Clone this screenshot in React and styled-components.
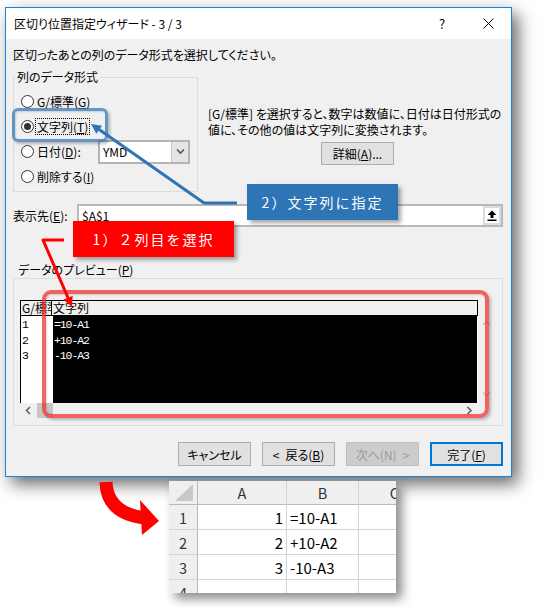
import React from "react";
import styled, { createGlobalStyle, css } from "styled-components";

const UI_FONT = `"Noto Sans CJK JP", "Noto Sans", sans-serif`;
const MONO_FONT = `"Liberation Mono", "Noto Sans CJK JP", monospace`;

const GlobalStyle = createGlobalStyle`
  html, body { margin: 0; padding: 0; background: #ffffff; }
  body { font-family: ${UI_FONT}; }
`;

const Page = styled.div`
  position: relative;
  width: 541px;
  height: 607px;
  overflow: hidden;
  padding-top: 7px;
  box-sizing: border-box;
  font-family: ${UI_FONT};
  font-feature-settings: "palt";
`;

/* ---------- dialog window ---------- */

const Dialog = styled.div`
  margin-left: 5px;
  width: 507px;
  height: 470px;
  box-sizing: border-box;
  border: 1px solid #1883d7;
  background: #f0f0f0;
  box-shadow: 6px 7px 16px rgba(0, 0, 0, 0.6);
  display: flex;
  flex-direction: column;
  font-size: 12px;
  color: #000;
`;

const TitleBar = styled.div`
  height: 31px;
  background: #ffffff;
  display: flex;
  align-items: center;
`;

const Title = styled.div`
  flex: 1;
  padding-left: 8px;
  line-height: 16px;
`;

const TitleButton = styled.div`
  width: 46px;
  height: 31px;
  display: flex;
  align-items: center;
  justify-content: center;
  font-size: 13px;
`;

const Body = styled.div`
  flex: 1;
  display: flex;
  flex-direction: column;
  padding: 8px 8px 0 7px;
`;

const Instruction = styled.div`
  line-height: 16px;
  white-space: nowrap;
`;

const Key = styled.span`
  text-decoration: underline;
  text-underline-offset: 1px;
`;

/* ---------- column data format group ---------- */

const FormatRow = styled.div`
  display: flex;
  margin-top: 14px;
`;

const Group = styled.div`
  width: 185px;
  box-sizing: border-box;
  border: 1px solid #dcdcdc;
  padding-bottom: 2px;
`;

const Legend = styled.div`
  width: fit-content;
  margin: -10px 0 3px 1px;
  padding: 0 2px;
  background: #f0f0f0;
  line-height: 18px;
`;

const RadioRow = styled.div`
  height: 25px;
  display: flex;
  align-items: center;
  padding-left: 7px;
`;

const RadioDot = styled.span`
  width: 13px;
  height: 13px;
  box-sizing: border-box;
  border-radius: 50%;
  border: 1px solid #333;
  background: #fff;
  display: flex;
  align-items: center;
  justify-content: center;
  flex: none;
  &::after {
    content: "";
    width: 7px;
    height: 7px;
    border-radius: 50%;
    background: ${(p) => (p.$checked ? "#333" : "transparent")};
  }
`;

const RadioLabel = styled.span`
  margin-left: 3px;
  line-height: 15px;
  white-space: nowrap;
  width: ${(p) => (p.$width ? `${p.$width}px` : "auto")};
  ${(p) =>
    p.$focused &&
    css`
      outline: 1px dotted #000;
      outline-offset: 0;
      padding: 0 1px;
      margin-left: 2px;
    `}
`;

const Select = styled.div`
  width: 92px;
  height: 24px;
  box-sizing: border-box;
  border: 2px solid #b4b4b4;
  background: #fff;
  display: flex;
`;

const SelectValue = styled.div`
  flex: 1;
  padding-left: 3px;
  line-height: 20px;
  font-size: 12px;
`;

const SelectButton = styled.div`
  width: 16px;
  background: #e5e5e5;
  border-left: 1px solid #c8c8c8;
  display: flex;
  align-items: center;
  justify-content: center;
`;

const Description = styled.div`
  margin-left: 10px;
  width: 295px;
  padding-top: 29px;
  display: flex;
  flex-direction: column;
`;

const DescText = styled.div`
  line-height: 16px;
  white-space: nowrap;
`;

const Button = styled.div`
  width: 73px;
  height: ${(p) => p.$h || 24}px;
  box-sizing: border-box;
  border: 1px solid #adadad;
  background: #e1e1e1;
  display: flex;
  align-items: center;
  justify-content: center;
  font-size: 12px;
  white-space: pre;
  ${(p) =>
    p.$primary &&
    css`
      border: 2px solid #0078d7;
    `}
  ${(p) =>
    p.$disabled &&
    css`
      border-color: #bfbfbf;
      background: #cccccc;
      color: #9a9a9a;
    `}
`;

const DetailButton = styled(Button)`
  margin: 4px auto 0;
  position: relative;
  left: 2px;
`;

/* ---------- destination row ---------- */

const DestRow = styled.div`
  display: flex;
  align-items: center;
  margin-top: 12px;
  height: 23px;
`;

const DestLabel = styled.div`
  width: 64px;
  white-space: nowrap;
`;

const DestInput = styled.div`
  flex: 1;
  height: 23px;
  box-sizing: border-box;
  border: 2px solid #b9b9b9;
  background: #fff;
  display: flex;
`;

const DestValue = styled.div`
  flex: 1;
  padding-left: 3px;
  line-height: 19px;
`;

const PickerButton = styled.div`
  width: 18px;
  background: #dcdcdc;
  display: flex;
  align-items: center;
  justify-content: center;
`;

const PickerFace = styled.div`
  width: 14px;
  height: 15px;
  background: #fff;
  display: flex;
  align-items: center;
  justify-content: center;
`;

/* ---------- data preview ---------- */

const PreviewCaption = styled.div`
  margin-top: 35px;
  padding-left: 5px;
  line-height: 16px;
`;

const PreviewGroup = styled.div`
  height: 148px;
  box-sizing: border-box;
  border: 1px solid #dcdcdc;
  padding: 21px 0 0 6px;
`;

const PreviewFrame = styled.div`
  width: 475px;
  display: flex;
  flex-direction: column;
`;

const TableRow = styled.div`
  display: flex;
`;

const Table = styled.div`
  width: 458px;
  display: flex;
  flex-direction: column;
`;

const TableHead = styled.div`
  height: 16px;
  box-sizing: border-box;
  border: 1px solid #000;
  display: flex;
  background: #f0f0f0;
  font-size: 12px;
  line-height: 14px;
  font-feature-settings: normal;
`;

const HeadCell = styled.div`
  width: ${(p) => (p.$w ? `${p.$w}px` : "auto")};
  flex: ${(p) => (p.$w ? "none" : 1)};
  box-sizing: border-box;
  border-right: ${(p) => (p.$w ? "1px solid #000" : "none")};
  padding-left: 1px;
  overflow: hidden;
  white-space: nowrap;
`;

const TableBody = styled.div`
  height: 87px;
  box-sizing: border-box;
  border-left: 1px solid #000;
  border-right: 1px solid #fff;
  display: flex;
`;

const BodyColumn = styled.div`
  width: ${(p) => (p.$w ? `${p.$w}px` : "auto")};
  flex: ${(p) => (p.$w ? "none" : 1)};
  background: ${(p) => (p.$dark ? "#000" : "#fff")};
  color: ${(p) => (p.$dark ? "#fff" : "#000")};
  padding: 1px 0 0 1px;
  font-family: ${MONO_FONT};
  font-size: 11.5px;
  letter-spacing: -1.1px;
  line-height: 15.5px;
`;

const VScroll = styled.div`
  width: 17px;
  display: flex;
  flex-direction: column;
  justify-content: space-between;
  align-items: center;
  padding: 20px 0 5px;
`;

const HScroll = styled.div`
  width: 458px;
  height: 15px;
  display: flex;
  align-items: stretch;
`;

const ScrollArrow = styled.div`
  width: 17px;
  display: flex;
  align-items: center;
  justify-content: center;
`;

const ScrollThumb = styled.div`
  width: 16px;
  background: #c6c6c6;
`;

const ScrollTrack = styled.div`
  flex: 1;
`;

const ButtonRow = styled.div`
  margin-top: 16px;
  display: flex;
  justify-content: flex-end;
  gap: 11px;
`;

/* ---------- worksheet below the dialog ---------- */

const Sheet = styled.div`
  margin: 4px 0 0 169px;
  width: 227px;
  height: 112px;
  overflow: hidden;
  background: #fff;
  box-shadow: 6px 6px 10px rgba(0, 0, 0, 0.45);
  display: grid;
  grid-template-columns: 29px 89px 72px 72px;
  grid-template-rows: 24px repeat(4, 25px);
  font-family: ${UI_FONT};
  font-feature-settings: normal;
`;

const Cell = styled.div`
  box-sizing: border-box;
  border-right: 1px solid #d4d4d4;
  border-bottom: 1px solid #d4d4d4;
  display: flex;
  align-items: center;
  justify-content: ${(p) =>
    p.$align === "right" ? "flex-end" : p.$align === "left" ? "flex-start" : "center"};
  padding: 0 3px;
  font-size: 15px;
  color: #000;
  white-space: nowrap;
  position: relative;
  ${(p) =>
    p.$head &&
    css`
      background: #efefef;
      color: #333;
      font-size: 14.5px;
    `}
  ${(p) =>
    p.$colHead &&
    css`
      border-bottom-color: #b9b9b9;
    `}
  ${(p) =>
    p.$rowHead &&
    css`
      border-right-color: #b9b9b9;
    `}
`;

/* ---------- annotations drawn over the page ---------- */

const Overlay = styled.svg`
  position: absolute;
  left: 0;
  top: 0;
  width: 541px;
  height: 607px;
  pointer-events: none;
`;

const Frame = styled.div`
  position: absolute;
  left: ${(p) => p.$x}px;
  top: ${(p) => p.$y}px;
  width: ${(p) => p.$w}px;
  height: ${(p) => p.$h}px;
  box-sizing: border-box;
  border: ${(p) => p.$line}px solid ${(p) => p.$color};
  border-radius: ${(p) => p.$r}px;
  box-shadow: 2px 2px 3px rgba(0, 0, 0, 0.25), inset 1px 1px 2px rgba(0, 0, 0, 0.15);
  pointer-events: none;
`;

const Callout = styled.div`
  position: absolute;
  left: ${(p) => p.$x}px;
  top: ${(p) => p.$y}px;
  width: ${(p) => p.$w}px;
  height: ${(p) => p.$h}px;
  background: ${(p) => p.$bg};
  color: #fff;
  display: flex;
  align-items: center;
  justify-content: center;
  font-size: 14px;
  letter-spacing: 2px;
  font-feature-settings: normal;
  box-shadow: 3px 3px 4px rgba(0, 0, 0, 0.35);
  white-space: nowrap;
`;

/* arrow head polygon pointing from `from` toward `tip` */
function headPoints(from, tip, len, half) {
  const dx = tip[0] - from[0];
  const dy = tip[1] - from[1];
  const d = Math.hypot(dx, dy);
  const ux = dx / d;
  const uy = dy / d;
  const bx = tip[0] - ux * len;
  const by = tip[1] - uy * len;
  const px = -uy * half;
  const py = ux * half;
  return `${tip[0]},${tip[1]} ${bx + px},${by + py} ${bx - px},${by - py}`;
}

const Chevron = ({ dir, color = "#606060" }) => {
  const paths = {
    left: "M5 1 L1.5 4.5 L5 8",
    right: "M1.5 1 L5 4.5 L1.5 8",
    up: "M1 5 L4.5 1.5 L8 5",
    down: "M1 1.5 L4.5 5 L8 1.5",
  };
  const vertical = dir === "up" || dir === "down";
  return (
    <svg width={vertical ? 9 : 7} height={vertical ? 7 : 9} viewBox={vertical ? "0 0 9 7" : "0 0 7 9"}>
      <path d={paths[dir]} fill="none" stroke={color} strokeWidth="1.6" />
    </svg>
  );
};

const previewRows = ["=10-A1", "+10-A2", "-10-A3"];

const sheetRows = [
  ["1", "1", "=10-A1"],
  ["2", "2", "+10-A2"],
  ["3", "3", "-10-A3"],
  ["4", "", ""],
];

export default function App() {
  const blueTip = [91, 124];
  const blueFrom = [204, 203];
  const redTip = [72, 307];
  const redFrom = [43, 240];

  return (
    <Page>
      <GlobalStyle />
      <Dialog>
        <TitleBar>
          <Title>区切り位置指定ウィザード - 3 / 3</Title>
          <TitleButton>?</TitleButton>
          <TitleButton>
            <svg width="11" height="11" viewBox="0 0 11 11">
              <path d="M0.5 0.5 L10.5 10.5 M10.5 0.5 L0.5 10.5" stroke="#000" strokeWidth="1" />
            </svg>
          </TitleButton>
        </TitleBar>

        <Body>
          <Instruction>区切ったあとの列のデータ形式を選択してください。</Instruction>

          <FormatRow>
            <Group>
              <Legend>列のデータ形式</Legend>
              <RadioRow>
                <RadioDot />
                <RadioLabel>
                  G/標準(<Key>G</Key>)
                </RadioLabel>
              </RadioRow>
              <RadioRow>
                <RadioDot $checked />
                <RadioLabel $focused>
                  文字列(<Key>T</Key>)
                </RadioLabel>
              </RadioRow>
              <RadioRow>
                <RadioDot />
                <RadioLabel $width={61}>
                  日付(<Key>D</Key>):
                </RadioLabel>
                <Select>
                  <SelectValue>YMD</SelectValue>
                  <SelectButton>
                    <Chevron dir="down" color="#555" />
                  </SelectButton>
                </Select>
              </RadioRow>
              <RadioRow>
                <RadioDot />
                <RadioLabel>
                  削除する(<Key>I</Key>)
                </RadioLabel>
              </RadioRow>
            </Group>

            <Description>
              <DescText>
                [G/標準] を選択すると、数字は数値に、日付は日付形式の
                <br />
                値に、その他の値は文字列に変換されます。
              </DescText>
              <DetailButton $h={23}>
                詳細(<Key>A</Key>)...
              </DetailButton>
            </Description>
          </FormatRow>

          <DestRow>
            <DestLabel>
              表示先(<Key>E</Key>):
            </DestLabel>
            <DestInput>
              <DestValue>$A$1</DestValue>
              <PickerButton>
                <PickerFace>
                  <svg width="10" height="11" viewBox="0 0 10 11">
                    <path d="M5 0.5 L9.5 5 L6.5 5 L6.5 8 L3.5 8 L3.5 5 L0.5 5 Z" fill="#000" />
                    <rect x="0.5" y="9.5" width="9" height="1.5" fill="#000" />
                  </svg>
                </PickerFace>
              </PickerButton>
            </DestInput>
          </DestRow>

          <PreviewCaption>
            データのプレビュー(<Key>P</Key>)
          </PreviewCaption>
          <PreviewGroup>
            <PreviewFrame>
              <TableRow>
                <Table>
                  <TableHead>
                    <HeadCell $w={31}>G/標準</HeadCell>
                    <HeadCell>文字列</HeadCell>
                  </TableHead>
                  <TableBody>
                    <BodyColumn $w={31}>
                      {previewRows.map((_, i) => (
                        <div key={i}>{i + 1}</div>
                      ))}
                    </BodyColumn>
                    <BodyColumn $dark>
                      {previewRows.map((r) => (
                        <div key={r}>{r}</div>
                      ))}
                    </BodyColumn>
                  </TableBody>
                </Table>
                <VScroll>
                  <Chevron dir="up" color="#c4c4c4" />
                  <Chevron dir="down" color="#c4c4c4" />
                </VScroll>
              </TableRow>
              <HScroll>
                <ScrollArrow>
                  <Chevron dir="left" />
                </ScrollArrow>
                <ScrollThumb />
                <ScrollTrack />
                <ScrollArrow>
                  <Chevron dir="right" />
                </ScrollArrow>
              </HScroll>
            </PreviewFrame>
          </PreviewGroup>

          <ButtonRow>
            <Button>キャンセル</Button>
            <Button>
              {"<\u2002戻る("}
              <Key>B</Key>)
            </Button>
            <Button $disabled>{"次へ(N)\u2002>"}</Button>
            <Button $primary>
              完了(<Key>F</Key>)
            </Button>
          </ButtonRow>
        </Body>
      </Dialog>

      <Sheet>
        <Cell $head $colHead $rowHead>
          <svg width="18" height="17" viewBox="0 0 18 17" style={{ position: "absolute", right: 4, bottom: 3 }}>
            <polygon points="18,0 18,17 0,17" fill="#c8c8c8" />
          </svg>
        </Cell>
        {["A", "B", "C"].map((c) => (
          <Cell key={c} $head $colHead>
            {c}
          </Cell>
        ))}
        {sheetRows.map(([n, a, b]) => (
          <React.Fragment key={n}>
            <Cell $head $rowHead>
              {n}
            </Cell>
            <Cell $align="right">{a}</Cell>
            <Cell $align="left">{b}</Cell>
            <Cell />
          </React.Fragment>
        ))}
      </Sheet>

      {/* highlight frames */}
      <Frame $x={12} $y={108} $w={96} $h={34} $line={3} $r={6} $color="rgba(46,117,182,0.72)" />
      <Frame $x={42} $y={290} $w={447} $h={128} $line={4} $r={9} $color="rgba(240,50,50,0.75)" />

      <Overlay viewBox="0 0 541 607">
        {/* blue connector to the text option */}
        <polyline
          points={`237,203 ${blueFrom[0]},${blueFrom[1]} 97,128`}
          fill="none"
          stroke="#2e75b6"
          strokeWidth="3"
          strokeLinejoin="round"
        />
        <polygon points={headPoints(blueFrom, blueTip, 10, 5)} fill="#2e75b6" />

        {/* red connector to the second column */}
        <polyline
          points={`64,240 ${redFrom[0]},${redFrom[1]} 69,300`}
          fill="none"
          stroke="#ff0000"
          strokeWidth="3"
          strokeLinejoin="round"
        />
        <polygon points={headPoints(redFrom, redTip, 10, 5)} fill="#ff0000" />

        {/* curved arrow down to the worksheet */}
        <path d="M106 482 Q107 514 146 518" fill="none" stroke="#ff0000" strokeWidth="13" />
        <polygon points="140,500 159,521 142,535" fill="#ff0000" />
      </Overlay>

      <Callout $x={247} $y={184} $w={151} $h={36} $bg="#2e75b6">
        2）文字列に指定
      </Callout>
      <Callout $x={73} $y={221} $w={161} $h={36} $bg="#ff0000">
        1）２列目を選択
      </Callout>
    </Page>
  );
}
